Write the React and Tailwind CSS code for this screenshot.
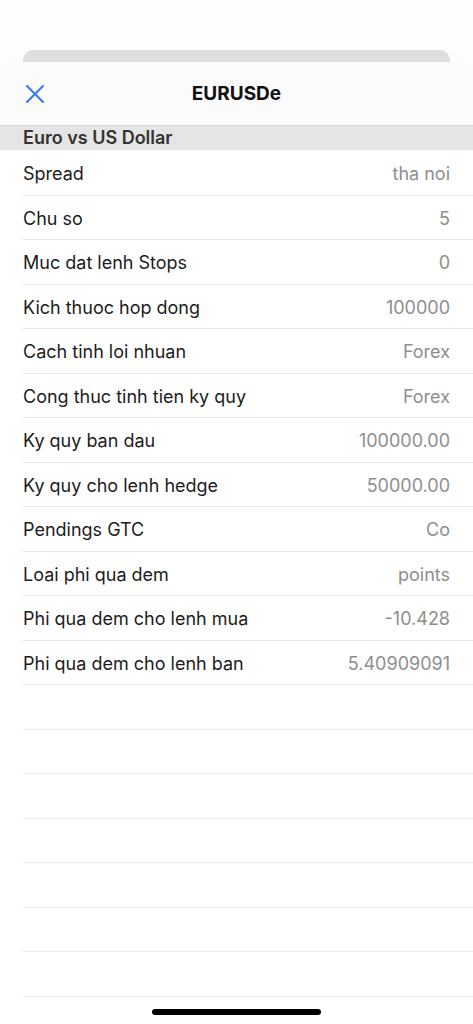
import React from 'react';

const rows = [
  { label: 'Spread', value: 'tha noi' },
  { label: 'Chu so', value: '5' },
  { label: 'Muc dat lenh Stops', value: '0' },
  { label: 'Kich thuoc hop dong', value: '100000' },
  { label: 'Cach tinh loi nhuan', value: 'Forex' },
  { label: 'Cong thuc tinh tien ky quy', value: 'Forex' },
  { label: 'Ky quy ban dau', value: '100000.00' },
  { label: 'Ky quy cho lenh hedge', value: '50000.00' },
  { label: 'Pendings GTC', value: 'Co' },
  { label: 'Loai phi qua dem', value: 'points' },
  { label: 'Phi qua dem cho lenh mua', value: '-10.428' },
  { label: 'Phi qua dem cho lenh ban', value: '5.40909091' },
];

export default function App() {
  return (
    <div
      className="relative flex h-[1024px] w-full flex-col overflow-hidden bg-[#fdfdfd]"
      style={{ fontFamily: 'Inter, "Noto Sans", sans-serif' }}
    >
      {/* card behind the sheet */}
      <div className="pt-[50px]">
        <div className="mx-[23px] h-[12px] rounded-t-[10px] bg-[#dedede]" />
      </div>

      {/* sheet */}
      <div className="flex flex-1 flex-col rounded-t-[10px] bg-white">
        <div className="relative flex h-[63px] items-center justify-center rounded-t-[10px] bg-[#fbfbfb]">
          <button className="absolute left-[25px] top-[22px] text-[#3478f6]">
            <svg width="20" height="20" viewBox="0 0 20 20" fill="none" stroke="currentColor" strokeWidth="2" strokeLinecap="round">
              <path d="M2 2 L18 18 M18 2 L2 18" />
            </svg>
          </button>
          <h1 className="pt-[1px] text-[19px] font-bold text-[#111]">EURUSDe</h1>
        </div>

        <div className="h-[25px] border-t border-[#d6d6d6] bg-[#e5e5e5] pl-[23px] text-[18px] font-semibold leading-[24px] text-[#333]">
          Euro vs US Dollar
        </div>

        <div className="flex flex-col pt-[1px]">
          {rows.map((r, i) => (
            <div
              key={i}
              className="ml-[23px] flex h-[44.5px] items-center justify-between border-b border-[#e6e6e6] pr-[23px] pt-[2px] text-[18px]"
            >
              <span className="text-[#1c1c1c]">{r.label}</span>
              <span className="text-[#8e8e8e]">{r.value}</span>
            </div>
          ))}
          {Array.from({ length: 7 }).map((_, i) => (
            <div key={'e' + i} className="ml-[23px] h-[44.5px] border-b border-[#ececec]" />
          ))}
        </div>
      </div>

      {/* home indicator */}
      <div className="absolute bottom-[9px] left-[152px] h-[6px] w-[169px] rounded-full bg-black" />
    </div>
  );
}
